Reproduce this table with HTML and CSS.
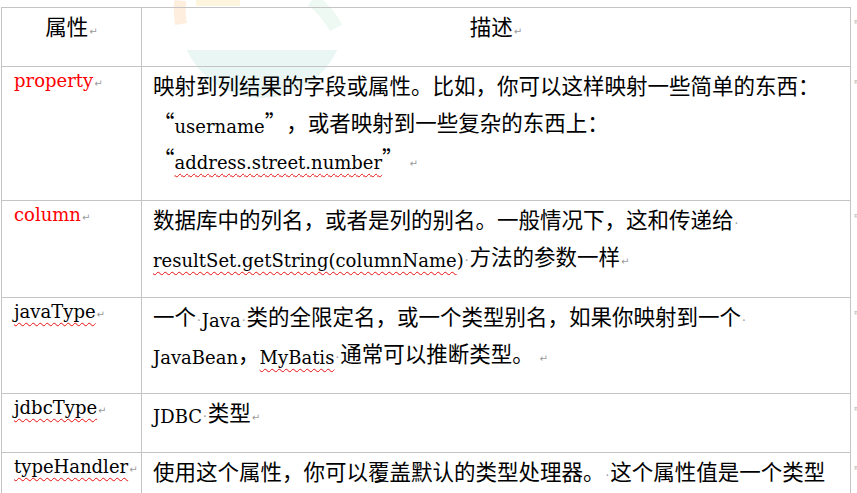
FILE: index.html
```html
<!DOCTYPE html>
<html lang="zh-CN">
<head>
    <meta charset="UTF-8">
    <meta name="viewport" content="width=device-width, initial-scale=1.0">
    <title>resultMap 属性说明</title>
    <link rel="stylesheet" href="styles.css">
</head>
<body>
    <!-- faint logo watermark behind the page -->
    <svg class="watermark" width="420" height="130" viewBox="0 0 420 130">
        <path d="M180.3 0.6 A83 83 0 0 0 181 24" stroke="#fde7d0" stroke-width="12" fill="none" opacity="0.7"/>
        <rect x="196" y="0" width="44" height="6" fill="#fef3d6" opacity="0.8"/>
        <path d="M312 0 A83 83 0 0 1 336 28" stroke="#e2f5ec" stroke-width="14" fill="none" opacity="0.6"/>
        <path d="M186.7 50 A83 83 0 0 0 337.3 50 Z" fill="#e9f6f3"/>
    </svg>

    <div class="sheet">
        <div class="cell key head">属性<span class="ret">↵</span></div>
        <div class="cell head">描述<span class="ret">↵</span></div>
        <div class="mark">¤</div>

        <div class="cell key name red">property<span class="ret">↵</span></div>
        <div class="cell">映射到列结果的字段或属性。比如，你可以这样映射一些简单的东西：<br><span class="ql">“</span><span class="en">username</span><span class="qr">”</span>，或者映射到一些复杂的东西上：<br><span class="ql">“</span><span class="en typo">address.street.number</span><span class="qr">”</span> <span class="ret">↵</span></div>
        <div class="mark">¤</div>

        <div class="cell key name red">column<span class="ret">↵</span></div>
        <div class="cell">数据库中的列名，或者是列的别名。一般情况下，这和传递给<span class="sp">·</span><br><span class="en"><span class="typo">resultSet.getString(columnName</span>)</span><span class="sp">·</span>方法的参数一样<span class="ret">↵</span></div>
        <div class="mark">¤</div>

        <div class="cell key name"><span class="typo">javaType</span><span class="ret">↵</span></div>
        <div class="cell">一个<span class="sp">·</span><span class="en">Java</span><span class="sp">·</span>类的全限定名，或一个类型别名，如果你映射到一个<span class="sp">·</span><br><span class="en">JavaBean</span>，<span class="en typo">MyBatis</span><span class="sp">·</span>通常可以推断类型。 <span class="ret">↵</span></div>
        <div class="mark">¤</div>

        <div class="cell key name"><span class="typo">jdbcType</span><span class="ret">↵</span></div>
        <div class="cell"><span class="en">JDBC</span><span class="sp">·</span>类型<span class="ret">↵</span></div>
        <div class="mark">¤</div>

        <div class="cell key name"><span class="typo">typeHandler</span><span class="ret">↵</span></div>
        <div class="cell">使用这个属性，你可以覆盖默认的类型处理器。<span class="sp">·</span>这个属性值是一个类型</div>
        <div class="mark">¤</div>
    </div>
</body>
</html>
```

FILE: styles.css
```css
body {
    margin: 0;
    height: 493px;
    overflow: hidden;
    position: relative;
    background: #fff;
}

.watermark {
    position: absolute;
    left: 0;
    top: 0;
}

.sheet {
    position: relative;
    display: grid;
    grid-template-columns: 141px 709px 7px;
    grid-template-rows: 60px 134px 97px 96px 59px 60px;
    margin: 7px 0 0 1px;
    font-family: "Noto Sans CJK SC", sans-serif;
    font-size: 21.5px;
    line-height: 36.5px;
    color: #000;
    text-spacing-trim: space-all;
}

.cell {
    box-sizing: border-box;
    border-right: 1px solid #c4c4c4;
    border-bottom: 1px solid #c4c4c4;
    padding: 0 6px 0 11px;
    white-space: nowrap;
    overflow: hidden;
}

.key {
    border-left: 1px solid #c4c4c4;
    padding-left: 12px;
}

.head {
    border-top: 1px solid #c4c4c4;
    text-align: center;
    padding-left: 0;
    padding-right: 0;
}

.name {
    font-family: "DejaVu Serif", serif;
    font-size: 18px;
    line-height: 28px;
}

.red {
    color: #f00;
}

.en {
    font-family: "DejaVu Serif", serif;
    font-size: 18px;
    line-height: 18px;
    vertical-align: -2px;
}

.ql,
.qr {
    display: inline-block;
    width: 21.5px;
}

.ql {
    text-align: right;
}

.qr {
    text-align: left;
}

.typo {
    text-decoration: underline wavy #e81010;
    text-decoration-thickness: 1px;
    text-underline-offset: 4px;
    text-decoration-skip-ink: none;
}

.sp {
    font-family: "DejaVu Serif", serif;
    font-size: 12px;
    line-height: 12px;
    color: #9a9a9a;
    padding: 0 1px;
}

.ret {
    font-family: "DejaVu Sans", sans-serif;
    font-size: 10px;
    line-height: 10px;
    color: #9a9a9a;
    margin-left: 1px;
}

.mark {
    font-family: "DejaVu Sans", sans-serif;
    font-size: 7px;
    line-height: 30px;
    color: #aaa;
    padding-left: 3px;
}
```
